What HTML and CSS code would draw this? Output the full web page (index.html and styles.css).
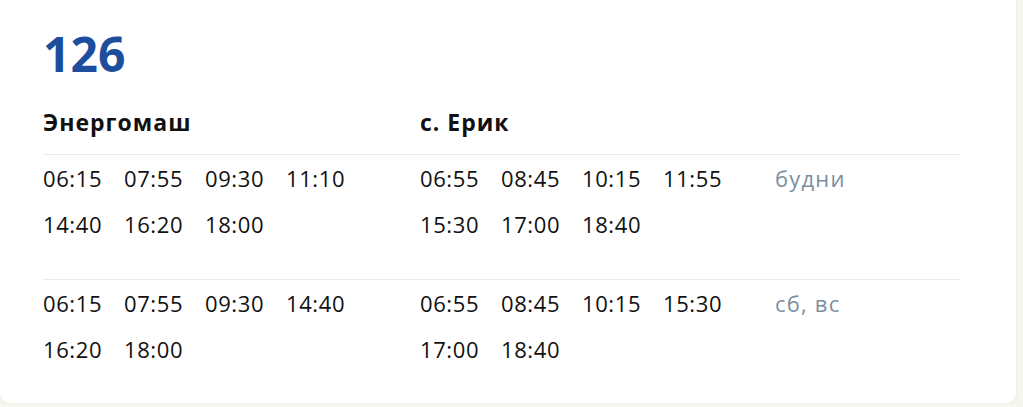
FILE: index.html
```html
<!DOCTYPE html>
<html lang="ru">

<head>
  <meta charset="UTF-8">
  <meta name="viewport" content="width=device-width, initial-scale=1.0">
  <title>126</title>
  <link rel="stylesheet" href="styles.css">
</head>

<body>
  <div class="card">
    <h1 class="route">126</h1>

    <div class="row heads">
      <div class="stop">Энергомаш</div>
      <div class="stop">с. Ерик</div>
    </div>

    <div class="row days">
      <div class="times">
        <span>06:15</span><span>07:55</span><span>09:30</span><span>11:10</span>
        <span>14:40</span><span>16:20</span><span>18:00</span>
      </div>
      <div class="times">
        <span>06:55</span><span>08:45</span><span>10:15</span><span>11:55</span>
        <span>15:30</span><span>17:00</span><span>18:40</span>
      </div>
      <div class="label">будни</div>
    </div>

    <div class="row days">
      <div class="times">
        <span>06:15</span><span>07:55</span><span>09:30</span><span>14:40</span>
        <span>16:20</span><span>18:00</span>
      </div>
      <div class="times">
        <span>06:55</span><span>08:45</span><span>10:15</span><span>15:30</span>
        <span>17:00</span><span>18:40</span>
      </div>
      <div class="label">сб, вс</div>
    </div>
  </div>
</body>

</html>
```

FILE: styles.css
```css
body {
  margin: 0;
  background-color: #f6f5ee;
  font-family: "Open Sans", "Noto Sans", sans-serif;
  color: #111;
}

.card {
  width: 1016px;
  height: 414px;
  margin-top: -11px;
  box-sizing: border-box;
  padding: 37px 0 0 43px;
  background-color: #fff;
  border-radius: 10px;
  box-shadow: 0 0 0 1px #efeee6;
}

.route {
  margin: 0;
  font-size: 48px;
  line-height: 56px;
  font-weight: 700;
  color: #1d4e9e;
}

.row {
  display: grid;
  grid-template-columns: 377px 355px 185px;
  width: 917px;
}

.heads {
  margin-top: 25px;
  padding-bottom: 17px;
}

.stop {
  font-size: 23px;
  line-height: 30px;
  font-weight: 700;
  letter-spacing: 1px;
}

.days {
  border-top: 1px solid #e1edf2;
  margin-bottom: 32px;
}

.days:last-child {
  margin-bottom: 0;
}

.times {
  display: grid;
  grid-template-columns: repeat(4, 81px);
  font-size: 22px;
  line-height: 46px;
  letter-spacing: 0.6px;
}

.label {
  font-size: 22px;
  line-height: 46px;
  letter-spacing: 1.2px;
  color: #7d8f9f;
}
```
